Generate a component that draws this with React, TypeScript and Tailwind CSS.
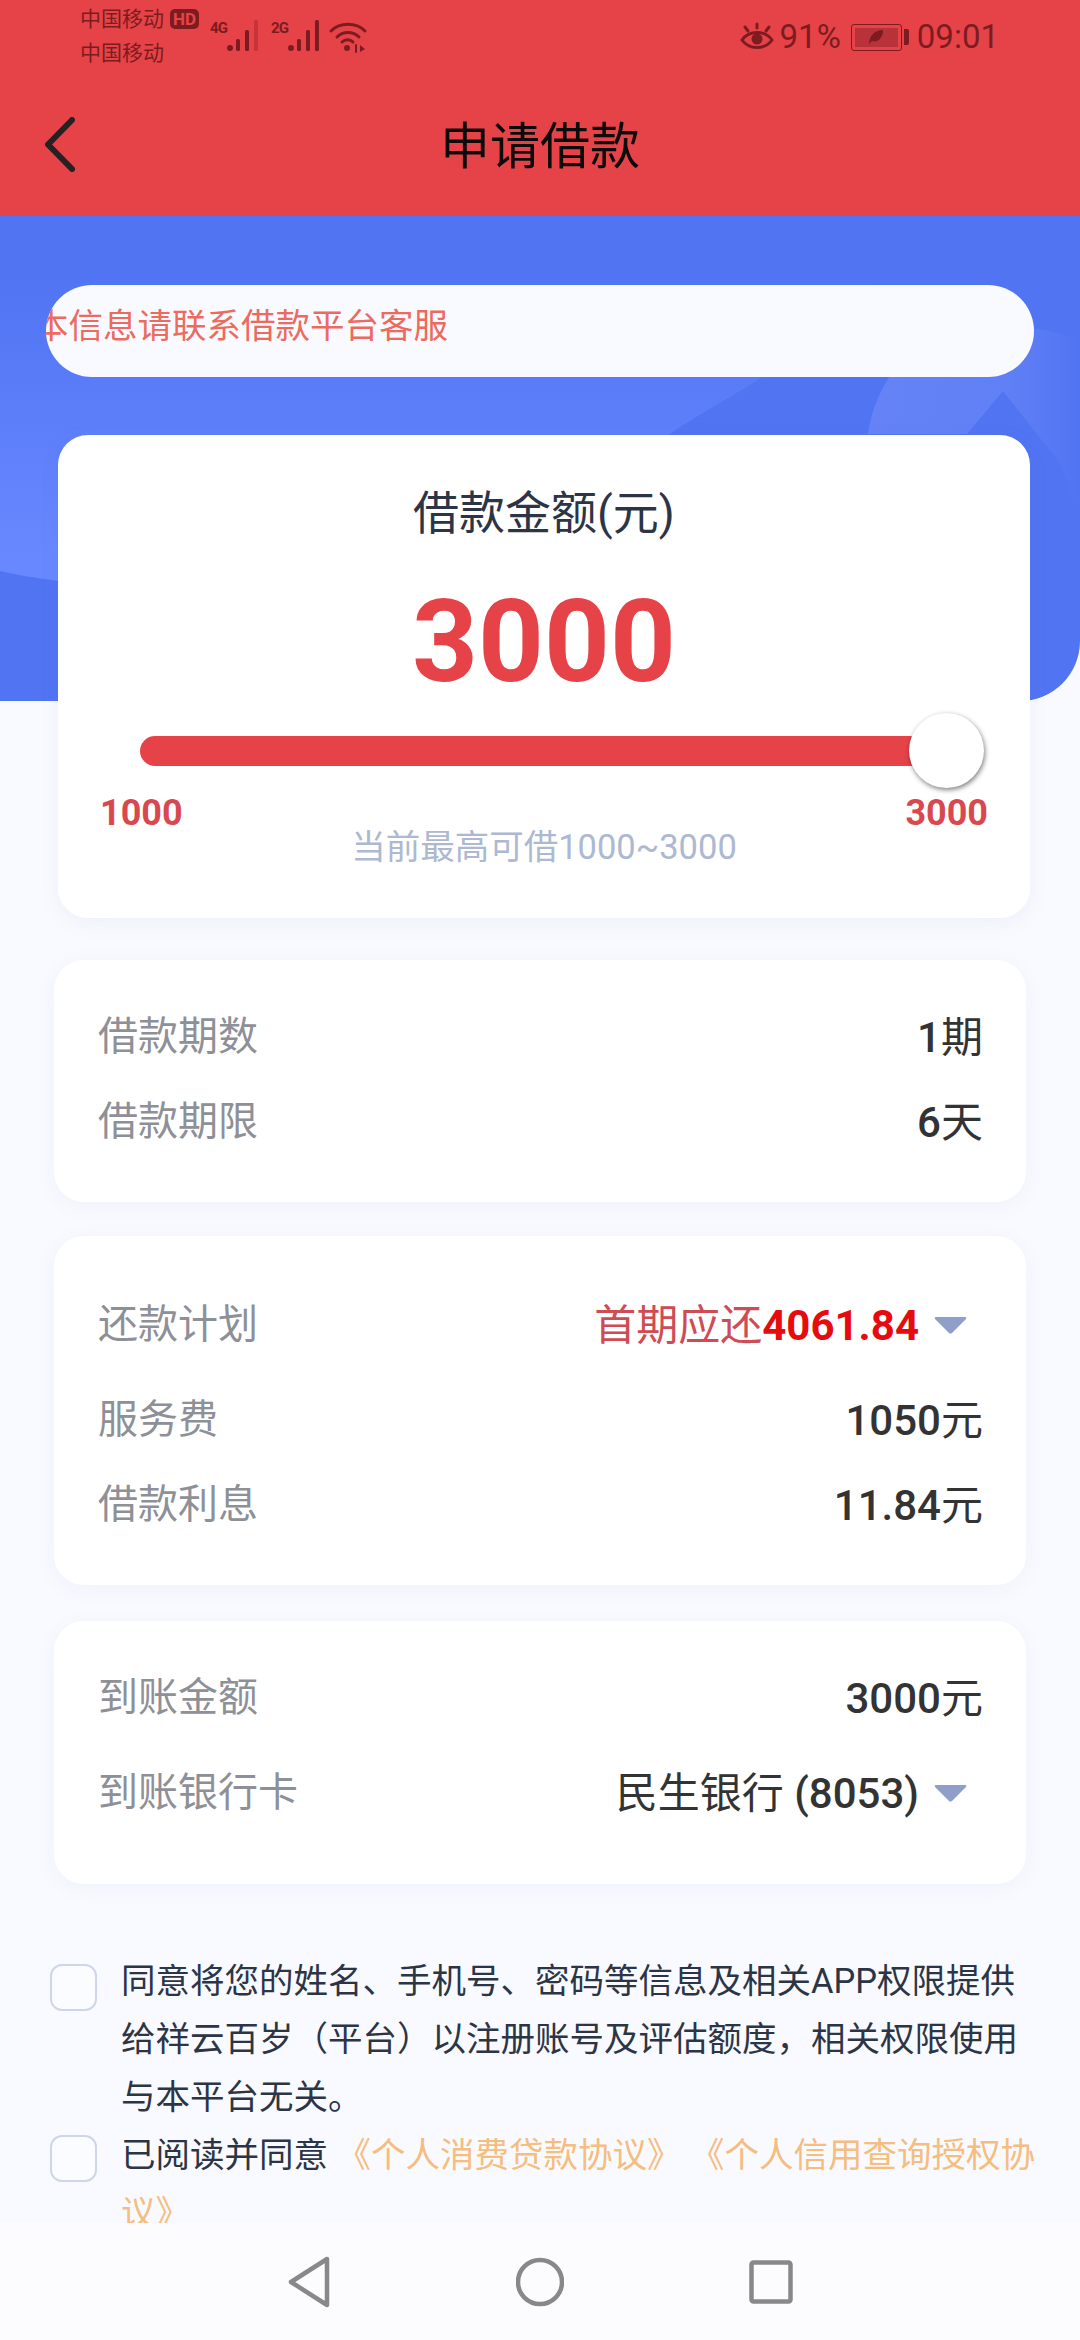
const FONT = "font-['Roboto','Noto_Sans_CJK_SC',sans-serif]";

function Signal({ dim }: { dim?: boolean }) {
  return (
    <svg width="32" height="32" viewBox="0 0 32 32">
      <circle cx="3" cy="28" r="3" fill="#7c1c20" />
      <rect x="9" y="19" width="4" height="12" rx="1.5" fill="#7c1c20" />
      <rect x="18" y="10" width="4" height="21" rx="1.5" fill="#7c1c20" />
      <rect x="27" y="0" width="4" height="31" rx="1.5" fill={dim ? '#c5343b' : '#7c1c20'} />
    </svg>
  );
}

function StatusBar() {
  return (
    <div className="flex h-[70px] items-start justify-between pl-[80px] pr-[81px] text-[#7c1c20]">
      <div className="flex items-start">
        <div className="flex flex-col pt-[2px] text-[21px] leading-[34px]">
          <div className="flex items-center gap-[6px]">
            <span>中国移动</span>
            <span className="flex h-[20px] w-[29px] items-center justify-center rounded-[5px] bg-[#7c1c20] text-[17px] font-bold text-[#e64349]">HD</span>
          </div>
          <span>中国移动</span>
        </div>
        <div className="ml-[11px] mt-[20px] flex items-start">
          <span className="w-[17px] whitespace-nowrap text-[15px] leading-[16px] font-bold tracking-tighter">4G</span>
          <Signal dim />
        </div>
        <div className="ml-[12px] mt-[20px] flex items-start">
          <span className="w-[17px] whitespace-nowrap text-[15px] leading-[16px] font-bold tracking-tighter">2G</span>
          <Signal />
        </div>
        <svg width="38" height="32" viewBox="0 0 38 32" fill="none" stroke="currentColor" strokeWidth="3" strokeLinecap="round" className="ml-[9px] mt-[21px]">
          <path d="M2 10 C 11 1, 27 1, 36 10" />
          <path d="M8 16 C 14 10, 24 10, 30 16" />
          <path d="M13 21 C 16 18, 21 18, 24 21" />
          <circle cx="18" cy="27" r="3" fill="currentColor" stroke="none" />
          <path d="M27 24 V31" strokeWidth="2" />
          <path d="M31 24 L36 28 L31 31 Z" fill="currentColor" stroke="none" />
        </svg>
      </div>
      <div className="mt-[19px] flex items-center text-[33px] leading-[36px]">
        <svg width="34" height="30" viewBox="0 0 34 30" fill="none" stroke="currentColor" strokeWidth="3" strokeLinecap="round">
          <path d="M2 18 C 9 8, 25 8, 32 18 C 25 28, 9 28, 2 18 Z" />
          <circle cx="17" cy="17" r="5.5" fill="currentColor" stroke="none" />
          <path d="M17 2 V6 M5 5 L8 9 M29 5 L26 9" />
        </svg>
        <span className="ml-[6px]">91%</span>
        <div className="ml-[10px] flex items-center">
          <div className="flex h-[27px] w-[51px] items-center rounded-[3px] border border-[#7c1c20] p-[3px]">
            <div className="flex h-full w-full items-center justify-center bg-[#b93239]">
              <svg width="16" height="16" viewBox="0 0 16 16" fill="#7c1c20">
                <path d="M1 15 C 1 7, 7 1, 15 1 C 15 9, 10 14, 4 12 Z" />
              </svg>
            </div>
          </div>
          <div className="ml-[2px] h-[16px] w-[5px] rounded-r-[2px] bg-[#7c1c20]" />
        </div>
        <span className="ml-[8px]">09:01</span>
      </div>
    </div>
  );
}

function Header() {
  return (
    <div className="h-[216px] shrink-0 bg-[#e64349]">
      <StatusBar />
      <div className="relative flex h-[146px] items-center justify-center pt-[8px]">
        <svg width="30" height="55" viewBox="0 0 30 55" fill="none" stroke="#262123" strokeWidth="6" strokeLinecap="round" strokeLinejoin="round" className="absolute left-[45px] top-[47px]">
          <path d="M27 3 L3 27.5 L27 52" />
        </svg>
        <span className="text-[50px] leading-[56px] text-[#0c0a0a]">申请借款</span>
      </div>
    </div>
  );
}

function Row({ label, children, className = '' }: { label: string; children: React.ReactNode; className?: string }) {
  return (
    <div className={`flex h-[56px] items-center justify-between ${className}`}>
      <span className="text-[40px] text-[#8e9097]">{label}</span>
      <span className="flex items-center whitespace-pre text-[42px] text-[#333333]">{children}</span>
    </div>
  );
}

function Num({ children }: { children: React.ReactNode }) {
  return <span className="font-medium">{children}</span>;
}

function Caret() {
  return (
    <svg width="33" height="18" viewBox="0 0 33 18" className="ml-[15px] mr-[16px]">
      <path d="M2 1 H31 Q33 1 32 3 L18 17 Q16.5 18 15 17 L1 3 Q0 1 2 1 Z" fill="#8f9fc9" />
    </svg>
  );
}

function AmountCard() {
  return (
    <div className="relative ml-[58px] h-[483px] w-[972px] rounded-[30px] bg-white pt-[48px] shadow-[0_4px_20px_rgba(90,110,180,0.08)]">
      <div className="text-center text-[46px] leading-[60px] text-[#2c3546]">借款金额(元)</div>
      <div className="mt-[34px] text-center text-[115px] leading-[130px] font-bold text-[#e64349]">3000</div>
      <div className="relative mx-[82px] mt-[29px] h-[30px] rounded-full bg-[#e64349]">
        <div className="absolute right-[-36px] top-[-23px] h-[75px] w-[75px] rounded-full bg-white shadow-[1px_2px_5px_rgba(0,0,0,0.5)]" />
      </div>
      <div className="mx-[42px] mt-[26px] flex justify-between text-[36px] leading-[42px] font-bold text-[#d9484f]">
        <span>1000</span>
        <span>3000</span>
      </div>
      <div className="mt-[-10px] text-center text-[34.5px] leading-[46px] text-[#adb8d1]">当前最高可借1000~3000</div>
    </div>
  );
}

function Card({ className, children }: { className: string; children: React.ReactNode }) {
  return (
    <div className={`ml-[54px] flex w-[972px] flex-col rounded-[30px] bg-white pl-[44px] pr-[43px] shadow-[0_4px_20px_rgba(90,110,180,0.06)] ${className}`}>
      {children}
    </div>
  );
}

function Checkbox() {
  return <div className="h-[47px] w-[47px] shrink-0 rounded-[12px] border-2 border-[#cdd6ea] bg-[#fbfcff]" />;
}

function Agreements() {
  return (
    <div className="ml-[50px] mt-[68px] text-[34.5px] leading-[58px] text-[#2c3546]">
      <div className="flex gap-[24px]">
        <div className="mt-[12px]"><Checkbox /></div>
        <p className="w-[920px]">同意将您的姓名、手机号、密码等信息及相关APP权限提供给祥云百岁（平台）以注册账号及评估额度，相关权限使用与本平台无关。</p>
      </div>
      <div className="flex gap-[24px]">
        <div className="mt-[9px]"><Checkbox /></div>
        <p className="w-[920px]">
          已阅读并同意{' '}
          <span className="text-[#f5bd7e]">《个人消费贷款协议》 《个人信用查询授权协议》</span>
        </p>
      </div>
    </div>
  );
}

function Hero() {
  return (
    <div className="absolute left-0 top-0 h-[485px] w-full overflow-hidden rounded-br-[60px] bg-[#5174f3]">
      <svg width="1080" height="485" viewBox="0 0 1080 485" className="block">
        <defs>
          <linearGradient id="wave" gradientUnits="userSpaceOnUse" x1="0" y1="60" x2="0" y2="340">
            <stop offset="0" stopColor="#5174f3" />
            <stop offset="1" stopColor="#6888ff" />
          </linearGradient>
          <linearGradient id="blob" gradientUnits="userSpaceOnUse" x1="870" y1="0" x2="1080" y2="0">
            <stop offset="0" stopColor="#6583f5" />
            <stop offset="0.65" stopColor="#6080f5" />
            <stop offset="1" stopColor="#5174f3" />
          </linearGradient>
        </defs>
        <path d="M0 40 L940 20 C 880 60 840 90 800 130 C 771 161 720 185 671 217 L 640 260 L 58 365 C 36 362 18 359 0 355 Z" fill="url(#wave)" />
        <path d="M868 218 C 872 190 882 172 893 155 C 920 120 990 100 1033 112 C 1050 115 1066 118 1080 125 V 300 L 1060 247 L 1003 175 L 967 218 Z" fill="url(#blob)" />
      </svg>
    </div>
  );
}

export default function App() {
  return (
    <div className={`${FONT} flex h-[2340px] w-[1080px] flex-col overflow-hidden bg-[#f9faff]`}>
      <Header />
      <div className="relative flex-1 overflow-hidden">
        <Hero />
        <div className="relative">
          <div className="ml-[46px] mt-[69px] flex h-[92px] w-[988px] items-center overflow-hidden rounded-full bg-[#f9faff]">
            <span className="mb-[8px] ml-[-12px] whitespace-nowrap text-[34.5px] text-[#ec6a5e]">本信息请联系借款平台客服</span>
          </div>
          <div className="mt-[58px]"><AmountCard /></div>
          <Card className="mt-[42px] h-[242px] pt-[49px]">
            <Row label="借款期数"><Num>1</Num>期</Row>
            <Row label="借款期限" className="mt-[29px]"><Num>6</Num>天</Row>
          </Card>
          <Card className="mt-[34px] h-[349px] pt-[61px]">
            <Row label="还款计划">
              <span className="text-[#cf4c55]">首期应还</span>
              <span className="font-bold text-[#e60b0e]">4061.84</span>
              <Caret />
            </Row>
            <Row label="服务费" className="mt-[39px]"><Num>1050</Num>元</Row>
            <Row label="借款利息" className="mt-[29px]"><Num>11.84</Num>元</Row>
          </Card>
          <Card className="mt-[36px] h-[263px] pt-[49px]">
            <Row label="到账金额"><Num>3000</Num>元</Row>
            <Row label="到账银行卡" className="mt-[39px]">
              民生银行 <Num>(8053)</Num>
              <Caret />
            </Row>
          </Card>
          <Agreements />
        </div>
      </div>
      <div className="relative z-10 flex h-[117px] shrink-0 items-center justify-center gap-[185px] bg-[#fcfcff]">
        <svg width="44" height="52" viewBox="0 0 44 52" fill="none" stroke="#888888" strokeWidth="4.5" strokeLinejoin="round">
          <path d="M40 3 L4 26 L40 49 Z" />
        </svg>
        <svg width="48" height="50" viewBox="0 0 48 50" fill="none" stroke="#888888" strokeWidth="4.5">
          <circle cx="24" cy="25" r="22" />
        </svg>
        <svg width="44" height="44" viewBox="0 0 44 44" fill="none" stroke="#888888" strokeWidth="4.5" strokeLinejoin="round">
          <rect x="2.5" y="2.5" width="39" height="39" rx="2" />
        </svg>
      </div>
    </div>
  );
}
